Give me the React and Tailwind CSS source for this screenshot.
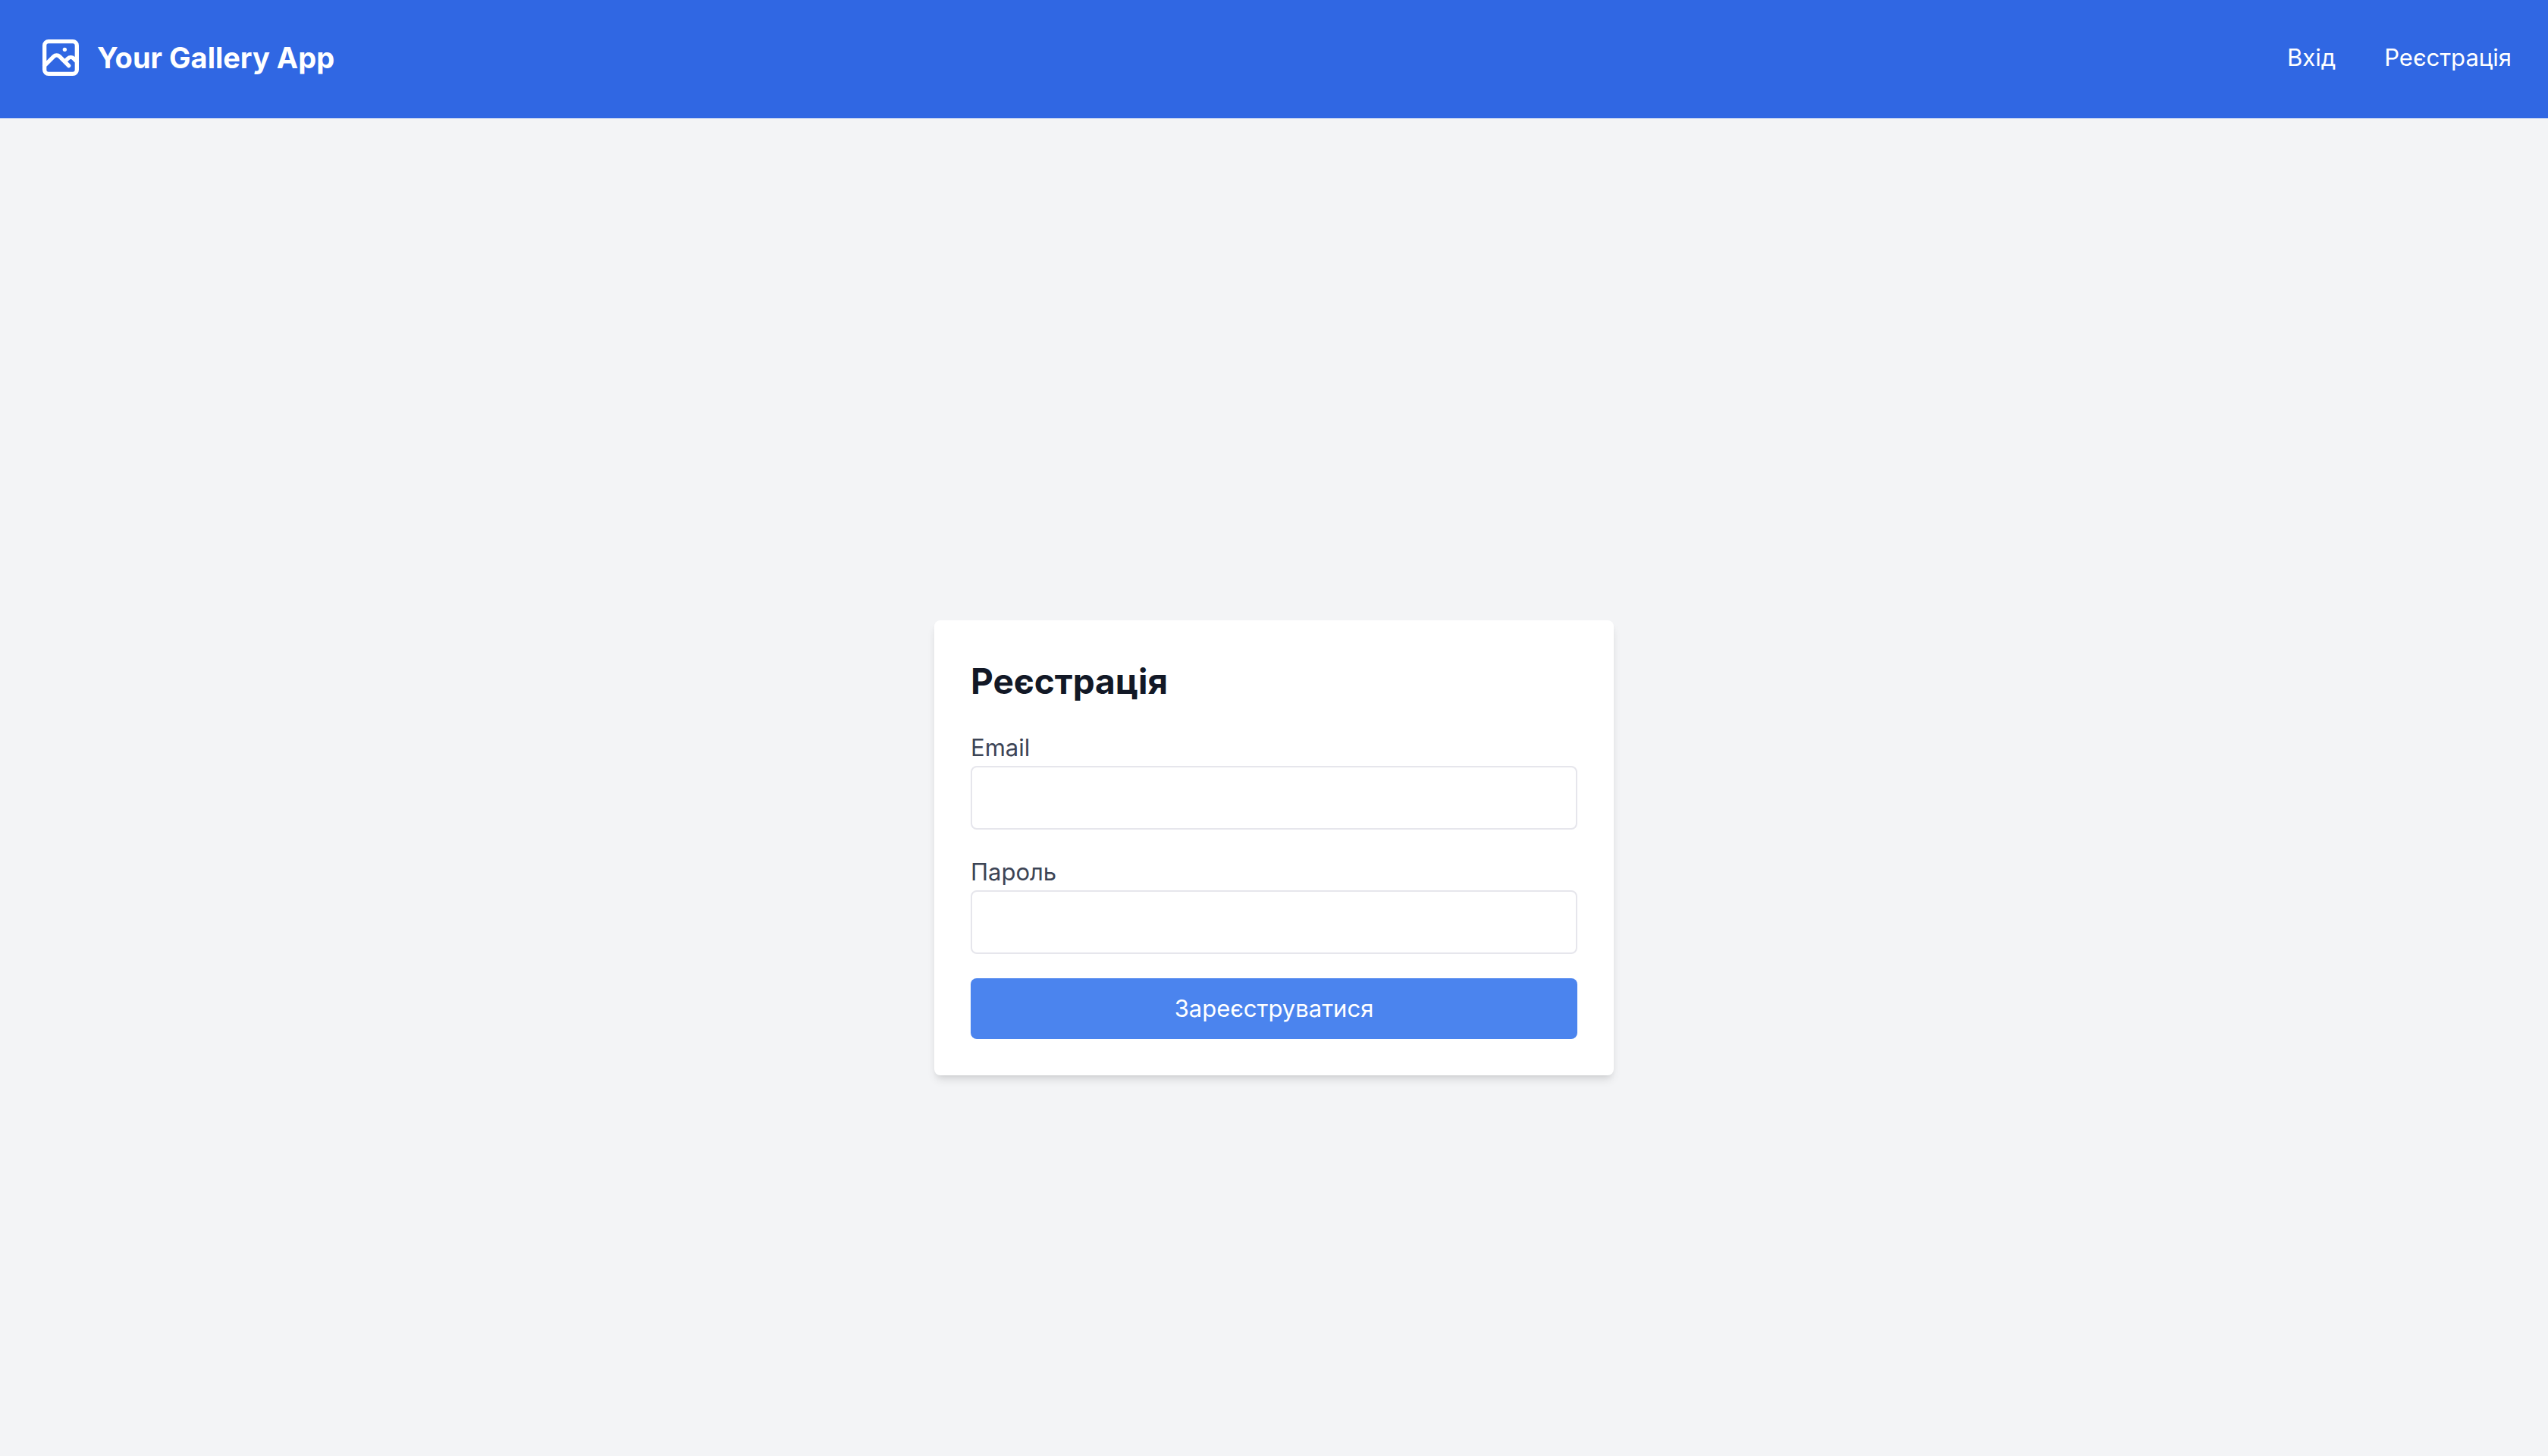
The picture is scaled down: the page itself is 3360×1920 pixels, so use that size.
import React from 'react';

function GalleryIcon() {
  return (
    <svg
      className="size-16 shrink-0"
      fill="none"
      viewBox="0 0 24 24"
      stroke="currentColor"
      strokeWidth="2"
      strokeLinecap="round"
      strokeLinejoin="round"
      aria-hidden="true"
    >
      <path d="M4 16l4.586-4.586a2 2 0 012.828 0L16 16m-2-2l1.586-1.586a2 2 0 012.828 0L20 14m-6-6h.01M6 20h12a2 2 0 002-2V6a2 2 0 00-2-2H6a2 2 0 00-2 2v12a2 2 0 002 2z" />
    </svg>
  );
}

function Header() {
  return (
    <header className="flex items-center justify-between bg-[#3067e3] px-12 pt-11 pb-12 text-white">
      <a href="#" className="flex items-center gap-4">
        <GalleryIcon />
        <span className="text-[38px] leading-[56px] font-bold">Your Gallery App</span>
      </a>
      <nav className="flex gap-16 text-[31px] leading-[48px]">
        <a href="#login">Вхід</a>
        <a href="#register">Реєстрація</a>
      </nav>
    </header>
  );
}

function Field({ id, label, type }) {
  return (
    <div className="mb-8">
      <label htmlFor={id} className="block text-[#3c4455]">
        {label}
      </label>
      <input
        id={id}
        type={type}
        className="block h-[84px] w-full rounded-lg border-2 border-[#e6e6ec] bg-white px-4 outline-none"
      />
    </div>
  );
}

export default function App() {
  return (
    <div className="flex min-h-screen flex-col bg-[#f3f4f6] font-['Inter','Noto_Sans',sans-serif]">
      <Header />
      <main className="flex flex-1 items-center justify-center pt-40">
        <form className="w-full max-w-4xl rounded-lg bg-white p-12 text-[31px] leading-[48px] shadow-[0_8px_12px_-2px_rgba(0,0,0,0.1),0_4px_8px_-4px_rgba(0,0,0,0.1)]">
          <h2 className="mb-8 text-[46px] leading-[64px] font-bold text-[#121826]">Реєстрація</h2>
          <Field id="email" label="Email" type="email" />
          <Field id="password" label="Пароль" type="password" />
          <button
            type="submit"
            className="block w-full rounded-lg bg-[#4b84ee] py-4 text-white"
          >
            Зареєструватися
          </button>
        </form>
      </main>
    </div>
  );
}
